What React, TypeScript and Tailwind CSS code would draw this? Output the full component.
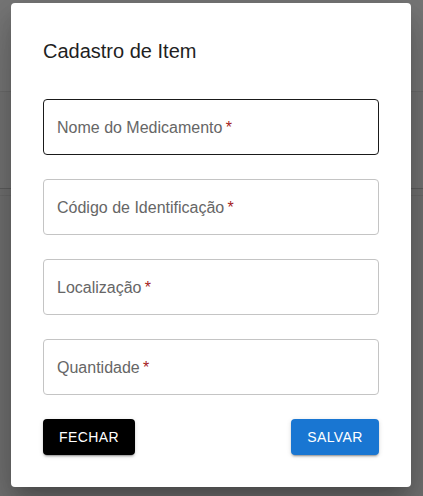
import React from "react";

const fields = [
  { label: "Nome do Medicamento", focused: true },
  { label: "Código de Identificação", focused: false },
  { label: "Localização", focused: false },
  { label: "Quantidade", focused: false },
];

export default function App() {
  return (
    <div
      className="relative w-[423px] h-[496px] overflow-hidden bg-[#747474]"
      style={{ fontFamily: '"Liberation Sans", Arial, sans-serif' }}
    >
      <div className="absolute inset-0 flex flex-col">
        <div className="h-[92px] bg-[#777777] border-b border-[#6c6c6c]" />
        <div className="h-[96px] bg-[#747474]" />
        <div className="h-[8px] bg-[#717171] border-t border-[#5e5e5e] border-b border-b-[#6a6a6a]" />
        <div className="flex-1 bg-[#717171]" />
      </div>
      <div className="absolute left-[11px] top-[3px] w-[400px] h-[484px] bg-white rounded-[4px] shadow-[0_11px_15px_-7px_rgba(0,0,0,0.2),0_24px_38px_3px_rgba(0,0,0,0.14),0_9px_46px_8px_rgba(0,0,0,0.12)] p-[32px] flex flex-col">
        <h2 className="text-[20px] leading-[32px] text-[#1f1f1f] font-normal">Cadastro de Item</h2>
        <div className="mt-[32px] flex flex-col gap-[24px]">
          {fields.map((f) => (
            <div
              key={f.label}
              className={
                "h-[56px] rounded-[4px] border flex items-center pl-[13px] " +
                (f.focused ? "border-[#1a1a1a]" : "border-[#c4c4c4]")
              }
            >
              <span className="text-[16px] leading-[23px] text-[#666666]">
                {f.label}
                <span className="text-[#a52222]">{"\u2009*"}</span>
              </span>
            </div>
          ))}
        </div>
        <div className="mt-[24px] flex justify-between">
          <button className="h-[36px] w-[92px] rounded-[4px] bg-black text-white text-[14px] font-medium tracking-[0.4px] uppercase shadow-[0_3px_1px_-2px_rgba(0,0,0,0.2),0_2px_2px_0_rgba(0,0,0,0.14),0_1px_5px_0_rgba(0,0,0,0.12)]">
            FECHAR
          </button>
          <button className="h-[36px] w-[88px] rounded-[4px] bg-[#1976d2] text-white text-[14px] font-medium tracking-[0.4px] uppercase shadow-[0_3px_1px_-2px_rgba(0,0,0,0.2),0_2px_2px_0_rgba(0,0,0,0.14),0_1px_5px_0_rgba(0,0,0,0.12)]">
            SALVAR
          </button>
        </div>
      </div>
    </div>
  );
}
